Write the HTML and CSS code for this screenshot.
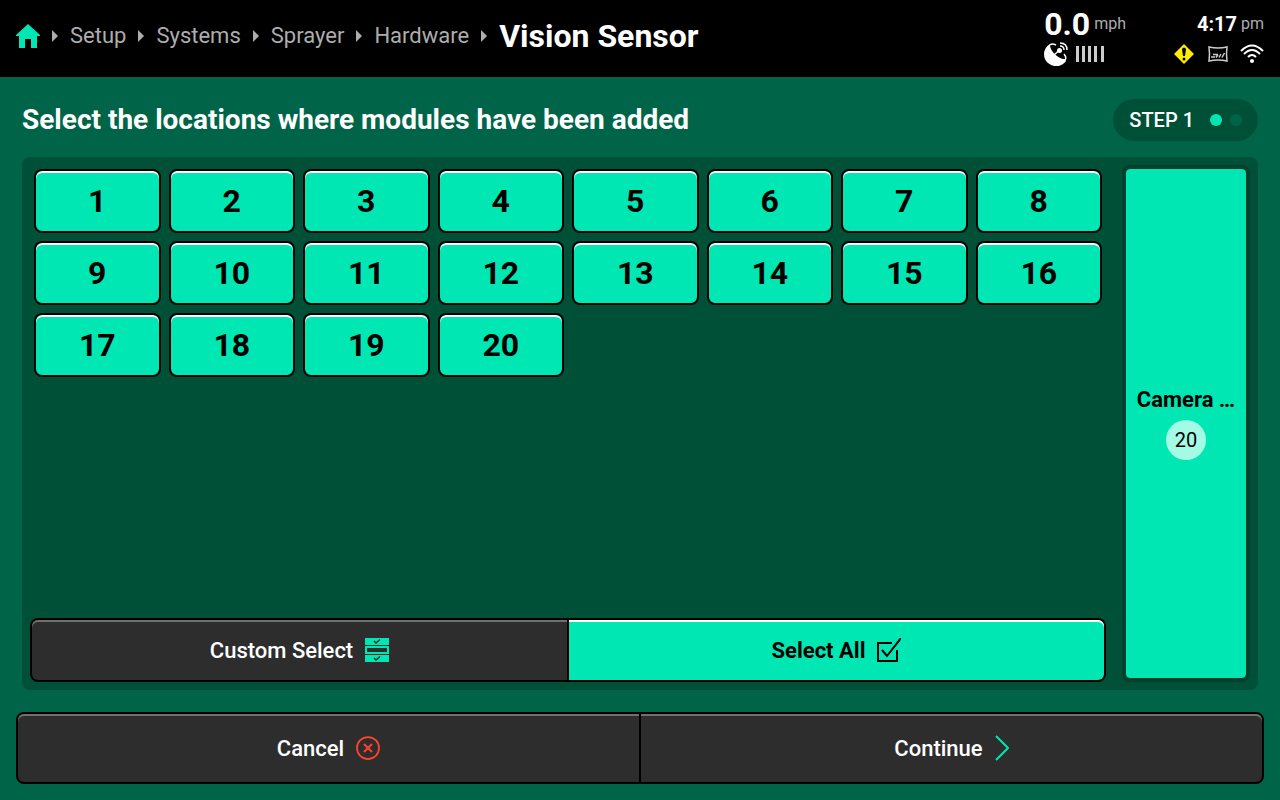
FILE: index.html
```html
<!DOCTYPE html>
<html lang="en">
<head>
    <meta charset="UTF-8">
    <meta name="viewport" content="width=device-width, initial-scale=1.0">
    <title>Vision Sensor</title>
    <link rel="stylesheet" href="styles.css">
</head>
<body>
    <header class="topbar">
        <nav class="breadcrumb" aria-label="Breadcrumb">
            <a href="#home" aria-label="Home">
                <svg class="home" viewBox="0 0 24 24"><path d="M12 0L24 11V12H21V24H15V15H9V24H3V12H0V11Z"/></svg>
            </a>
            <span class="arrow"></span>
            <a href="#setup">Setup</a>
            <span class="arrow"></span>
            <a href="#systems">Systems</a>
            <span class="arrow"></span>
            <a href="#sprayer">Sprayer</a>
            <span class="arrow"></span>
            <a href="#hardware">Hardware</a>
            <span class="arrow"></span>
            <h1>Vision Sensor</h1>
        </nav>

        <div class="status">
            <div class="status-group">
                <div class="speed"><strong>0.0</strong> <span>mph</span></div>
                <div class="gps">
                    <svg class="dish" viewBox="0 0 24 24">
                        <path d="M6 2C-1 6-2 16 4 21S18 25 22 19L21 17C16 18 6 10 6 3Z" fill="#fff"/>
                        <path d="M6 3Q8 1 12 3M20 12Q23 16 21 18" fill="none" stroke="#fff" stroke-width="1.5"/>
                        <path d="M10 13L15 8.5" stroke="#fff" stroke-width="1.5"/>
                        <circle cx="15.5" cy="8.5" r="2.5" fill="#fff"/>
                        <path d="M16 4Q20 4 20 8M16 1Q23 1 23 8" fill="none" stroke="#fff" stroke-width="1.5"/>
                    </svg>
                    <svg class="bars" viewBox="0 0 28 16"><path d="M1.5 0V16M7.5 0V16M13.5 0V16M19.5 0V16M26.5 0V16" stroke="#ccc" stroke-width="3"/></svg>
                </div>
            </div>
            <div class="status-group">
                <div class="clock"><strong>4:17</strong> <span>pm</span></div>
                <div class="indicators">
                    <svg class="warning" viewBox="-2 -2 24 24">
                        <path d="M10 0L20 10L10 20L0 10Z" fill="#ffed00"/>
                        <path d="M8 5Q10 2 12 5L11 12H9Z"/>
                        <circle cx="10" cy="15" r="1.5"/>
                    </svg>
                    <svg class="field" viewBox="0 0 20 16" fill="none" stroke="#ccc" stroke-width="1.5">
                        <path d="M1 1Q10 3 19 1Q18 8 19 15Q10 13 1 15Q2 8 1 1Z"/>
                        <path d="M3 11H7M5 8.5H10M8 11.5L10 8.5M11 11.5L13 8M14 11.5L16.5 7"/>
                    </svg>
                    <svg class="wifi" viewBox="0 0 24 20" fill="none" stroke="#fff" stroke-width="2">
                        <path d="M1 7Q12-4 23 7M4 10Q12 2 20 10M8 13Q12 9 16 13"/>
                        <circle cx="12" cy="17" r="2" fill="#fff" stroke="none"/>
                    </svg>
                </div>
            </div>
        </div>
    </header>

    <main class="content">
        <div class="title-row">
            <h2>Select the locations where modules have been added</h2>
            <div class="step">STEP 1 <span class="dots"><i class="dot active"></i><i class="dot"></i></span></div>
        </div>

        <section class="panel">
            <div class="selection">
                <div class="locations">
                    <button class="location">1</button>
                    <button class="location">2</button>
                    <button class="location">3</button>
                    <button class="location">4</button>
                    <button class="location">5</button>
                    <button class="location">6</button>
                    <button class="location">7</button>
                    <button class="location">8</button>
                    <button class="location">9</button>
                    <button class="location">10</button>
                    <button class="location">11</button>
                    <button class="location">12</button>
                    <button class="location">13</button>
                    <button class="location">14</button>
                    <button class="location">15</button>
                    <button class="location">16</button>
                    <button class="location">17</button>
                    <button class="location">18</button>
                    <button class="location">19</button>
                    <button class="location">20</button>
                </div>
                <div class="btn-group">
                    <button>
                        Custom Select
                        <svg class="icon" viewBox="0 0 24 24">
                            <path d="M0 0H24V7H0ZM0 17H24V24H0Z" fill="#00e7b3"/>
                            <path d="M1 9H23V15H1Z" fill="none" stroke="#00e7b3" stroke-width="2"/>
                            <path d="M9 3L11 5L15 1.5M9 20L11 22L15 18.5" fill="none" stroke="#2d2d2d" stroke-width="1.5"/>
                        </svg>
                    </button>
                    <button class="selected">
                        Select All
                        <svg class="icon" viewBox="0 0 24 24" fill="none" stroke="#000" stroke-width="2">
                            <path d="M15 5H1V23H20V12"/>
                            <path d="M5 12L10 18L24 0"/>
                        </svg>
                    </button>
                </div>
            </div>
            <button class="camera">
                <span class="camera-name">Camera …</span>
                <span class="camera-count">20</span>
            </button>
        </section>
    </main>

    <footer class="btn-group actions">
        <button>
            Cancel
            <svg class="icon" viewBox="0 0 24 24" fill="none" stroke="#ff432e" stroke-width="1.75">
                <circle cx="12" cy="12" r="11"/>
                <path d="M8 8L16 16M16 8L8 16" stroke-width="2"/>
            </svg>
        </button>
        <button>
            Continue
            <svg class="chevron" viewBox="0 0 14 26" fill="none" stroke="#00e7b3" stroke-width="2"><path d="M1 1L13 13L1 25"/></svg>
        </button>
    </footer>
</body>
</html>
```
FILE: styles.css
```css
* { box-sizing: border-box; margin: 0; }
body {
    display: flex; flex-direction: column; min-height: 100vh;
    background: #006548; color: #fff; font-family: Roboto, sans-serif;
}
svg { display: block; flex: none; }
a { color: inherit; text-decoration: none; }
button { font-family: inherit; color: inherit; cursor: pointer; padding: 0; }

/* Top bar */
.topbar {
    display: flex; justify-content: space-between; align-items: center;
    height: 77px; padding: 0 16px 2px; background: #000;
}
.breadcrumb { display: flex; align-items: center; gap: 12px; margin-bottom: 4px; color: #adadad; font-size: 22px; }
.breadcrumb h1 { color: #fff; font-size: 32px; line-height: 40px; font-weight: 700; }
.home { width: 24px; height: 24px; fill: #00e7b3; }
.arrow { border-left: 6px solid #adadad; border-top: 6px solid transparent; border-bottom: 6px solid transparent; }
.status { display: flex; gap: 46px; }
.status-group { display: flex; flex-direction: column; }
.speed, .clock { display: flex; align-items: center; gap: 4px; height: 32px; color: #adadad; font-size: 16px; }
.speed strong { color: #fff; font-size: 32px; }
.clock { justify-content: flex-end; }
.clock strong { color: #fff; font-size: 20px; }
.gps { display: flex; align-items: center; gap: 8px; height: 28px; }
.dish { width: 24px; height: 24px; }
.bars { width: 28px; height: 16px; }
.indicators { display: flex; align-items: center; justify-content: flex-end; gap: 12px; height: 28px; }
.warning { width: 24px; height: 24px; }
.field { width: 20px; height: 16px; }
.wifi { width: 24px; height: 20px; }

/* Content */
.content { display: flex; flex-direction: column; flex: 1; padding: 22px; }
.title-row { display: flex; justify-content: space-between; align-items: center; margin-bottom: 16px; }
.title-row h2 { font-size: 28px; line-height: 36px; font-weight: 700; }
.step {
    display: flex; align-items: center; gap: 16px; height: 42px; padding: 0 16px;
    border-radius: 21px; background: #005038; font-size: 20px; font-weight: 500;
}
.dots { display: flex; gap: 8px; }
.dot { width: 12px; height: 12px; border-radius: 50%; background: #006548; }
.dot.active { background: #00e7b3; }
.panel { display: flex; flex: 1; gap: 16px; padding: 8px; border-radius: 8px; background: #005038; }
.selection { display: flex; flex-direction: column; justify-content: space-between; flex: 1; }
.locations { display: grid; grid-template-columns: repeat(8, 1fr); gap: 8px; padding: 4px; }
.location {
    height: 64px; border: 2px solid #000; border-radius: 8px;
    background: #00e7b3; box-shadow: inset 0 2px #fff;
    color: #000; font-size: 32px; font-weight: 700;
}
.camera {
    display: flex; flex-direction: column; align-items: center; justify-content: center; gap: 8px;
    width: 128px; padding: 0 8px; border: 4px solid #00412d; border-radius: 8px;
    background: #00e7b3; background-clip: padding-box; color: #000; font-size: 22px;
}
.camera-name { white-space: nowrap; font-weight: 700; }
.camera-count { width: 40px; border-radius: 50%; background: #a3fbe6; font-size: 20px; line-height: 40px; }

/* Joined buttons */
.btn-group { display: flex; height: 64px; gap: 2px; padding: 2px; border-radius: 8px; background: #000; }
.btn-group button {
    display: flex; flex: 1; align-items: center; justify-content: center; gap: 12px;
    border: none; background: #2d2d2d; box-shadow: inset 0 2px #707070;
    font-size: 22px; font-weight: 500;
}
.btn-group button:first-child { border-radius: 6px 0 0 6px; }
.btn-group button:last-child { border-radius: 0 6px 6px 0; }
.btn-group .selected { background: #00e7b3; box-shadow: inset 0 2px #fff; color: #000; font-weight: 700; }
.actions { height: 72px; margin: 0 16px 16px; }
.icon { width: 24px; height: 24px; }
.chevron { width: 14px; height: 26px; }
```
